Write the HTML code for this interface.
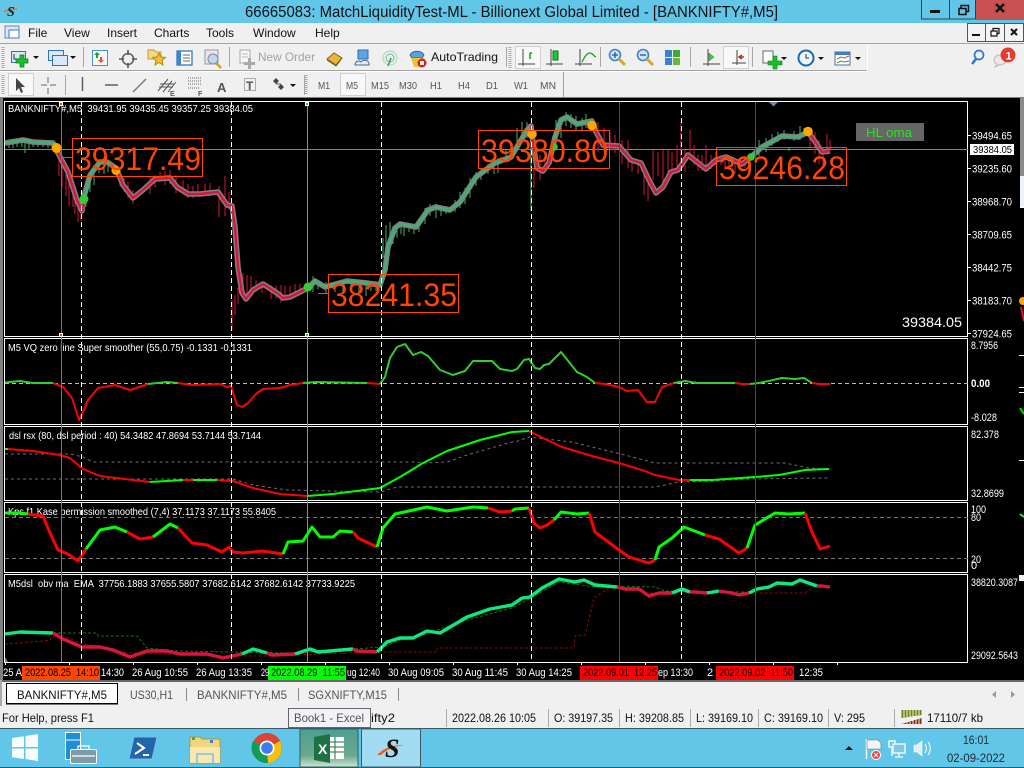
<!DOCTYPE html>
<html><head><meta charset="utf-8"><title>BANKNIFTY</title>
<style>
html,body{margin:0;padding:0;width:1024px;height:768px;overflow:hidden;background:#f0f0f0}
svg{display:block;font-family:"Liberation Sans",sans-serif}
text{white-space:pre}
.c{fill:#fff;font-size:10.5px}
.a{fill:#fff;font-size:11px}
.m{fill:#111;font-size:12px}
.s{fill:#111;font-size:12px}
.t{fill:#fff;font-size:12px}
.p{fill:#ff4500;font-size:32px}
.tb{fill:#555;font-size:10.5px}
.l{fill:none;stroke-linejoin:round;stroke-linecap:butt}
.crisp{shape-rendering:crispEdges}
</style></head><body>
<svg width="1024" height="768" viewBox="0 0 1024 768" xmlns="http://www.w3.org/2000/svg">
<!-- title bar -->
<rect width="1024" height="23" fill="#62c6e8"/>
<text x="245" y="17" font-size="15.5" fill="#111" textLength="533" lengthAdjust="spacingAndGlyphs">66665083: MatchLiquidityTest-ML - Billionext Global Limited - [BANKNIFTY#,M5]</text>
<path d="M4 12C8 9 12 9 17 9" stroke="#e8742a" stroke-width="1.5" fill="none"/>
<text x="7" y="16" font-size="14" font-style="italic" font-family="Liberation Serif" font-weight="bold" fill="#222">S</text>
<rect x="921.5" y="-1" width="28" height="20" fill="none" stroke="#29444f"/>
<rect x="949.5" y="-1" width="26" height="20" fill="none" stroke="#29444f"/>
<rect x="976" y="0" width="48" height="20" fill="#c75050"/>
<rect x="930" y="10" width="10" height="3" fill="#111"/>
<path d="M959 8.5h7v6h-7zM961 8V5.5h7.5v6H966" fill="none" stroke="#111" stroke-width="1.5"/>
<path d="M996 4l8 8m0-8l-8 8" stroke="#111" stroke-width="2.5"/>
<!-- menu bar -->
<rect y="23" width="1024" height="20" fill="#f0f0f0"/>
<rect x="5" y="26" width="14" height="12" fill="#dbe8f5" stroke="#5a8ac0"/>
<rect x="9" y="30" width="10" height="8" fill="#fff" stroke="#3f7ab8"/>
<text class="m" x="28" y="37">File</text><text class="m" x="64" y="37">View</text><text class="m" x="107" y="37">Insert</text><text class="m" x="154" y="37">Charts</text><text class="m" x="206" y="37">Tools</text><text class="m" x="253" y="37">Window</text><text class="m" x="315" y="37">Help</text>
<g fill="#f4f4f4" stroke="#555"><rect x="967.5" y="23.5" width="18" height="18"/><rect x="985.5" y="23.5" width="19" height="18"/><rect x="1004.5" y="23.5" width="19" height="18"/></g>
<rect x="972" y="34" width="8" height="2" fill="#111"/>
<path d="M991 31h6v5h-6zM993 30.5v-2h6v5h-2" fill="none" stroke="#111" stroke-width="1.2"/>
<path d="M1011 29l6 6m0-6l-6 6" stroke="#111" stroke-width="2"/>
<!-- toolbars -->
<rect y="43" width="1024" height="54" fill="#f0f0f0"/>
<rect y="43" width="1024" height="1" fill="#a3a3a3"/>
<rect y="70" width="867" height="1" fill="#a3a3a3"/><rect y="71" width="868" height="1" fill="#fff"/>
<rect x="867" y="44" width="1" height="26" fill="#fff"/>
<rect x="563" y="72" width="1" height="25" fill="#a3a3a3"/>
<g stroke="#aaa" stroke-dasharray="1 1" stroke-width="3" class="crisp"><path d="M3 47v21M3 75v20M510 47v21M306 75v20"/></g>
<g stroke="#a6a6a6" class="crisp"><path d="M83.5 47v20M229.5 47v20M506.5 47v20M600.5 47v20M690.5 47v20M752.5 47v20M65.5 75v20M304.5 75v20"/></g>
<!-- toolbar1 icons -->
<rect x="11.5" y="51.5" width="14" height="11" fill="#dbe8f8" stroke="#2f74b8"/><path d="M14 54v5h6" stroke="#333" fill="none"/>
<path d="M20 53h4v4h4v4h-4v4h-4v-4h-4v-4h4z" transform="translate(0,2)" fill="#18c02c" stroke="#0b7a18" stroke-width=".7"/>
<path d="M33 56h6l-3 3z" fill="#111"/>
<rect x="48.5" y="50.5" width="15" height="10" fill="#dbe8f8" stroke="#2f74b8"/><rect x="52.5" y="55.5" width="15" height="10" fill="#dbe8f8" stroke="#2f74b8"/>
<path d="M70 56h6l-3 3z" fill="#111"/>
<rect x="92.5" y="50.5" width="15" height="15" fill="#f7f7f7" stroke="#4a90d0"/><path d="M97 52l3 3h-2v3h-2v-3h-2z" fill="#1ba32b"/><path d="M101 63l-3-3h2v-3h2v3h2z" fill="#e4532a"/>
<circle cx="128" cy="59" r="5.5" fill="none" stroke="#666" stroke-width="1.6"/><path d="M128 50v5M128 63v5M119 59h5M132 59h5" stroke="#555" stroke-width="1.6"/>
<path d="M148 50h6l2 2h5v7h-13z" fill="#f5d98a" stroke="#c39a30"/><path d="M159 53l2 4 4.5.5-3.5 3 1 4.5-4-2.5-4 2.5 1-4.5-3.5-3 4.5-.5z" fill="#f2c12e" stroke="#b48a12"/>
<rect x="177" y="51" width="15" height="14" fill="#fff" stroke="#3579c0" stroke-width="1.3"/><rect x="177" y="51" width="4" height="14" fill="#3d86cf"/><path d="M183 55h7M183 58h7M183 61h7" stroke="#666"/>
<rect x="205" y="50" width="13" height="14" fill="#e7e7e7" stroke="#999"/><circle cx="213" cy="59" r="5" fill="#bcd8f2" stroke="#889"/><path d="M216 63l5 5" stroke="#d69c25" stroke-width="2.5"/>
<rect x="240" y="50" width="10" height="13" fill="#f7f7f7" stroke="#aaa"/><path d="M242 54h6M242 57h6" stroke="#bbb"/><path d="M248 58h3v4h4v3h-4v4h-3v-4h-4v-3h4z" fill="#aaa"/>
<text x="258" y="61" font-size="12" fill="#a2a2a2" textLength="57" lengthAdjust="spacingAndGlyphs">New Order</text>
<path d="M327 59l7-6 8 5-6 7z" fill="#e8b63c" stroke="#8a6014"/><path d="M327 60l9 6 6-8" fill="none" stroke="#7a5210"/>
<rect x="358" y="50" width="10" height="9" fill="#5aa6e4" stroke="#2c6fb0"/><path d="M355 65c0-4 4-5 6-3 2-3 9-2 8 3z" fill="#dfeaf6" stroke="#4a6a8a"/>
<circle cx="390" cy="58" r="7" fill="#e7efe7" stroke="#9db"/><circle cx="390" cy="58" r="4" fill="none" stroke="#8ab"/><path d="M388 66l3-8" stroke="#3aaa44" stroke-width="1.6"/>
<path d="M410 55c2-5 12-5 14 0l-2 3h-10z" fill="#5aa2d8" stroke="#2c6a9c"/><path d="M411 58h14l-2 9h-9z" fill="#f0c23c"/><circle cx="422" cy="63" r="4.5" fill="#d42020"/><rect x="420" y="61" width="4" height="4" fill="#fff"/>
<text x="431" y="61" font-size="12" fill="#111" textLength="67" lengthAdjust="spacingAndGlyphs">AutoTrading</text>
<rect x="515.5" y="46.5" width="25" height="22" fill="#f8f8f8" stroke="#d0d0d0"/>
<g fill="none" stroke="#444"><path d="M523 49v17M518 64h17M580 49v17M575 64h17M551 49v17M546 64h17M708 49v17M703 64h17M737 49v17M732 64h17"/></g>
<path d="M530 53v6M530 53h2" stroke="#1a9a2a" stroke-width="1.5" fill="none"/>
<rect x="553" y="51" width="5" height="9" fill="#1fc43a" stroke="#0a7a1a"/>
<path d="M582 62c3-6 5-9 8-9s3 3 6 4" stroke="#1a9a2a" fill="none" stroke-width="1.3"/>
<circle cx="615" cy="55" r="5.5" fill="#cfe3f6" stroke="#3a86c8" stroke-width="1.6"/><path d="M612 55h6M615 52v6" stroke="#3a66a0" stroke-width="1.5"/><path d="M619 59l6 6" stroke="#d9a72a" stroke-width="3"/>
<circle cx="643" cy="55" r="5.5" fill="#cfe3f6" stroke="#3a86c8" stroke-width="1.6"/><path d="M640 55h6" stroke="#3a66a0" stroke-width="1.5"/><path d="M647 59l6 6" stroke="#d9a72a" stroke-width="3"/>
<rect x="665" y="50" width="7" height="7" fill="#3a7fd0"/><rect x="673" y="50" width="7" height="7" fill="#3fa836"/><rect x="665" y="58" width="7" height="7" fill="#3a7fd0"/><rect x="673" y="58" width="7" height="7" fill="#6fb43a"/>
<path d="M709 53l5 4-5 4z" fill="#4cc04c" stroke="#1a8a2a" stroke-width=".5"/>
<rect x="723.5" y="46.5" width="25" height="22" fill="#f8f8f8" stroke="#d0d0d0"/>
<path d="M737 50v15M732 63h14" stroke="#444" fill="none"/><path d="M739 57h5M742 55l-3 2 3 2" stroke="#c03020" fill="none" stroke-width="1.5"/>
<rect x="763" y="51" width="10" height="12" fill="#fff" stroke="#666"/><path d="M773 56h4v5h5v4h-5v4h-4v-4h-5v-4h5z" fill="#16c02a" stroke="#0c7a18" stroke-width=".6"/>
<path d="M781 57h6l-3 3z" fill="#111"/>
<circle cx="806" cy="58" r="7.5" fill="#eef6fc" stroke="#1f6ab0" stroke-width="2"/><path d="M806 54v4h3" stroke="#333" fill="none"/>
<path d="M818 57h6l-3 3z" fill="#111"/>
<rect x="835" y="52" width="15" height="13" fill="#fff" stroke="#4a70a0"/><rect x="835" y="52" width="15" height="3" fill="#3a80c8"/><path d="M837 59l4-2 3 1 5-2" stroke="#c05030" fill="none"/><path d="M837 63l4-2 3 1 5-1" stroke="#3a9a3a" fill="none"/>
<path d="M855 57h6l-3 3z" fill="#111"/>
<circle cx="979" cy="55" r="4.5" fill="none" stroke="#2f74c8" stroke-width="1.7"/><path d="M976 59l-4 5" stroke="#2f74c8" stroke-width="2.5"/>
<ellipse cx="1000" cy="60" rx="6" ry="5" fill="#e8e8e8" stroke="#bbb"/><path d="M997 64l-2 3 4-2" fill="#e8e8e8" stroke="#bbb"/>
<circle cx="1008" cy="55" r="7.5" fill="#e53b2e"/><text x="1005.5" y="59.5" font-size="11" font-weight="bold" fill="#fff">1</text>
<!-- toolbar2 icons -->
<rect x="8.5" y="73.5" width="25" height="22" fill="#f8f8f8" stroke="#d0d0d0"/>
<path d="M16 78l0 13 3-3 2 5 2-1-2-5 4 0z" fill="#444"/>
<path d="M48 77v6M48 88v6M41 85h6M50 85h6" stroke="#666"/>
<path d="M82.5 77v14" stroke="#555" stroke-width="1.4"/><path d="M105 85h13" stroke="#555" stroke-width="1.4"/><path d="M133 92l13-13" stroke="#777" stroke-width="1.4"/>
<path d="M158 91l10-12M163 92l9-11M168 92l8-10M160 84h14M159 87h14" stroke="#555" fill="none"/><text x="170" y="96" font-size="7" font-weight="bold" fill="#555">E</text>
<path d="M188 78h13M188 81h13M188 84h13M188 88h11" stroke="#666" stroke-dasharray="1 1"/><text x="198" y="96" font-size="7" font-weight="bold" fill="#555">F</text>
<text x="217" y="92" font-size="13" font-weight="bold" fill="#555">A</text>
<rect x="244.5" y="78.5" width="11" height="12" fill="none" stroke="#666" stroke-dasharray="1 1"/><text x="246" y="90" font-size="12" font-weight="bold" fill="#555">T</text>
<path d="M273 81l3-3 3 3-3 3z M278 87l3-3 3 3-3 3z" fill="#444"/><path d="M276 84l5 0" stroke="#555"/>
<path d="M290 84h6l-3 3z" fill="#111"/>
<rect x="340.5" y="73.5" width="25" height="22" fill="#f8f8f8" stroke="#d0d0d0"/>
<g><text class="tb" x="318" y="89" textLength="12" lengthAdjust="spacingAndGlyphs">M1</text><text class="tb" x="346" y="89" textLength="12" lengthAdjust="spacingAndGlyphs">M5</text><text class="tb" x="371" y="89" textLength="18" lengthAdjust="spacingAndGlyphs">M15</text><text class="tb" x="399" y="89" textLength="18" lengthAdjust="spacingAndGlyphs">M30</text><text class="tb" x="430" y="89" textLength="12" lengthAdjust="spacingAndGlyphs">H1</text><text class="tb" x="458" y="89" textLength="12" lengthAdjust="spacingAndGlyphs">H4</text><text class="tb" x="486" y="89" textLength="12" lengthAdjust="spacingAndGlyphs">D1</text><text class="tb" x="514" y="89" textLength="14" lengthAdjust="spacingAndGlyphs">W1</text><text class="tb" x="540" y="89" textLength="16" lengthAdjust="spacingAndGlyphs">MN</text></g>

<!-- chart background -->
<rect x="0" y="97" width="1024" height="1" fill="#808080"/>
<rect x="0" y="98" width="1024" height="582" fill="#000"/>
<rect x="0" y="98" width="3" height="582" fill="#808080"/>
<rect x="1020" y="98" width="4" height="78" fill="#8a8a8a"/>
<rect x="1020" y="176" width="4" height="31" fill="#eef2fa"/>
<rect x="1020" y="207" width="4" height="1" fill="#fff"/>
<circle cx="1023" cy="301" r="4" fill="#ffa500"/>
<path d="M1021 307l3 14" stroke="#dc143c" stroke-width="2"/>
<rect x="1019" y="355" width="5" height="1" fill="#fff"/><rect x="1019" y="387" width="5" height="1" fill="#fff"/><rect x="1019" y="392" width="5" height="1" fill="#fff"/>
<rect x="1019" y="575" width="5" height="6" fill="#eef2fa"/><rect x="1019" y="460" width="5" height="1" fill="#fff"/>
<path d="M1020 408l4 6" stroke="#00e000" stroke-width="2"/><path d="M1020 514l4 3" stroke="#2fe06f" stroke-width="2"/>

<!-- pane frames -->
<g class="crisp" fill="none" stroke="#fff">
<rect x="4.5" y="101.5" width="963" height="235"/>
<rect x="4.5" y="338.5" width="963" height="86"/>
<rect x="4.5" y="426.5" width="963" height="74"/>
<rect x="4.5" y="502.5" width="963" height="70"/>
<rect x="4.5" y="574.5" width="963" height="88"/>
</g>

<!-- legends -->
<text class="c" x="8" y="112" textLength="245" lengthAdjust="spacingAndGlyphs">BANKNIFTY#,M5  39431.95 39435.45 39357.25 39384.05</text>
<text class="c" x="8" y="351" textLength="244" lengthAdjust="spacingAndGlyphs">M5 VQ zero line Super smoother (55,0.75) -0.1331 -0.1331</text>
<text class="c" x="9" y="439" textLength="252" lengthAdjust="spacingAndGlyphs">dsl rsx (80, dsl period : 40) 54.3482 47.8694 53.7144 53.7144</text>
<text class="c" x="8" y="515" textLength="268" lengthAdjust="spacingAndGlyphs">Kps f1 Kase permission smoothed (7,4) 37.1173 37.1173 55.8405</text>
<text class="c" x="8" y="587" textLength="347" lengthAdjust="spacingAndGlyphs">M5dsl  obv ma  EMA  37756.1883 37655.5807 37682.6142 37682.6142 37733.9225</text>

<!-- horizontal price and level lines -->
<path class="crisp" d="M5 149.5H968" stroke="#778899"/>
<g class="crisp" stroke="#bbb" stroke-dasharray="4 3"><path d="M5 383.5H968"/></g>
<g class="crisp" stroke="#777" stroke-dasharray="4 3"><path d="M5 517.5H968M5 558.5H968"/></g>

<!-- candle wicks -->
<path class="crisp" fill="none" stroke="#3cb371" d="M9 143v5M13 142v6M17 143v4M22 142v5M25 140v13M29 142v8M33 142v5M38 142v5M43 143v4M48 143v5M86 185v22M90 175v17M94 165v20M99 160v13M104 160v14M108 160v12M112 164v8M313 276v16M318 280v9M326 282v12M335 282v10M343 280v12M351 281v10M359 281v12M366 282v14M371 281v10M376 281v10M383 238v20M386 225v34M390 222v20M393 226v18M397 224v14M401 222v12M404 226v10M409 225v7M414 224v10M419 224v8M425 208v16M430 204v12M436 204v14M441 206v10M446 206v8M455 200v12M460 192v16M465 188v16M470 178v20M476 172v14M481 168v12M488 164v10M494 162v12M498 158v15M506 150v12M511 148v12M517 128v16M522 122v20M527 122v16M531 130v81M556 120v24M561 118v20M566 112v14M571 114v14M576 116v14M582 118v12M586 114v14M759 140v16M766 138v14M772 134v12M778 132v10M784 130v10M789 147v4M794 131v10M800 126v14M804 128v8"/>
<path class="crisp" fill="none" stroke="#dc143c" d="M59 158v18M62 165v22M66 168v28M69 172v34M73 185v22M75 190v24M78 196v26M81 200v21M120 170v16M124 178v14M128 182v16M133 190v14M150 178v16M155 175v12M160 172v10M165 171v14M170 170v14M176 175v18M183 180v14M188 184v14M193 186v12M198 184v10M205 184v10M210 183v8M219 186v31M225 176v40M229 192v18M232 204v20M232 300v30M235 295v20M238 288v16M243 273v22M247 275v20M251 276v14M256 280v12M262 283v10M271 285v14M276 286v12M281 285v18M285 286v12M290 286v10M295 284v10M300 284v10M536 140v24M534 168v20M540 155v25M545 160v10M598 122v30M604 128v24M610 132v18M615 135v18M622 140v24M628 140v28M632 158v14M638 162v12M644 165v30M648 180v21M653 150v30M658 152v24M663 150v32M668 150v30M672 152v24M677 145v22M681 122v43M685 150v22M690 130v30M694 145v20M698 155v16M702 155v15M706 145v26M711 155v14M716 152v14M721 155v10M725 156v14M729 158v12M735 160v14M740 162v8M745 160v8M810 128v20M815 132v22M819 140v24M823 148v18M827 134v18M830 140v12"/>

<!-- main line -->
<g class="l" stroke="#808080" stroke-width="5.5">
<polyline points="5,143 23,140 33,142 53,143 58,153 68,172 77,200 82,211 83,200 90,175 100,162 107,162 116,168 123,185 133,198 143,190 155,179 170,178 177,187 188,194 200,194 218,192 227,205 232,206 235,227 238,267 242,293 246,299 253,290 263,284 277,293 283,298 290,297 308,288 315,281 325,287 347,281 367,283 380,285 385,270 388,247 395,228 400,224 416,227 428,210 436,207 450,210 460,202 476,177 495,163 511,157 527,130 531,126 533,143 537,168 543,171 549,163 555,137 561,120 567,117 577,124 592,121 595,130 603,145 619,146 631,160 641,163 649,180 656,193 663,187 671,172 678,170 688,155 706,169 716,160 726,157 742,164 751,157 762,147 782,136 798,137 808,132 814,140 822,152 830,151"/>
</g>
<g class="l" stroke-width="2.4">
<polyline stroke="#3cb371" points="5,143 23,140 33,142 53,143 56,148"/>
<polyline stroke="#dc143c" points="56,148 58,153 68,172 77,200 82,211 84,204"/>
<polyline stroke="#3cb371" points="84,204 90,175 100,162 107,162 116,168"/>
<polyline stroke="#dc143c" points="116,168 123,185 133,198 143,190 155,179 170,178 177,187 188,194 200,194 218,192 227,205 232,206 235,227 238,267 242,293 246,299 253,290 263,284 277,293 283,298 290,297 308,288"/>
<polyline stroke="#3cb371" points="308,288 315,281 325,287 347,281 367,283 380,285 385,270 388,247 395,228 400,224 416,227 428,210 436,207 450,210 460,202 476,177 495,163 511,157 527,130 531,126"/>
<polyline stroke="#dc143c" points="531,126 533,143 537,168 543,171 549,163 553,145"/>
<polyline stroke="#3cb371" points="553,145 555,137 561,120 567,117 577,124 592,121"/>
<polyline stroke="#dc143c" points="592,121 595,130 603,145 619,146 631,160 641,163 649,180 656,193 663,187 671,172 678,170 688,155 706,169 716,160 726,157 742,164 751,157"/>
<polyline stroke="#3cb371" points="751,157 762,147 782,136 798,137 808,132"/>
<polyline stroke="#dc143c" points="808,132 814,140 822,152 830,151"/>
</g>

<!-- sub 1 -->
<g class="l" stroke-width="2">
<polyline stroke="#32cd32" points="5,382.5 20,381 33,383 53,383"/>
<polyline stroke="#f00" points="53,383 63,387 72,398 79,420 83,412 88,400 98,388 115,385 130,390 148,384"/>
<polyline stroke="#32cd32" points="148,384 167,382 178,383"/>
<polyline stroke="#f00" points="178,383 192,385 220,384 227,387 231,386 237,405 242,407 248,403 257,393 263,389 280,388 290,385 303,383"/>
<polyline stroke="#32cd32" points="303,383 315,382 367,383"/>
<polyline stroke="#f00" points="367,383 380,384"/>
<polyline stroke="#32cd32" points="380,384 385,377 390,358 397,347 405,344 413,355 421,352 428,356 440,370 453,375 465,371 473,361 492,361 500,369 512,371 517,369 524,360 529,359 535,368 540,369 544,365 549,364 561,352 577,372 587,377 595,383"/>
<polyline stroke="#f00" points="595,383 605,384 619,387 627,391 638,390 647,402 655,402 662,387 674,383"/>
<polyline stroke="#32cd32" points="674,383 685,381 697,383 735,383"/>
<polyline stroke="#f00" points="735,383 742,384 750,384"/>
<polyline stroke="#32cd32" points="750,384 759,383 782,378 795,379 804,378 812,383"/>
<polyline stroke="#f00" points="812,383 819,384 830,384"/>
</g>

<!-- sub 2 -->
<g class="l" stroke="#6e6e6e" stroke-dasharray="3 3">
<polyline points="5,454 70,454 83,457 93,462 417,462 423,463 447,462 467,455 512,442 515,442 529,437 572,442 592,447 625,455 655,463 785,463 809,468 829,469"/>
<polyline points="5,479 233,479 253,485 287,490 380,492 397,487 655,487 679,482 712,481 745,479 830,478"/>
</g>
<g class="l" stroke-width="2">
<polyline stroke="#0f0" points="5,449 8,449"/>
<polyline stroke="#f00" points="8,449 33,451 60,455 70,458 83,469 100,476 133,480 150,482"/>
<polyline stroke="#0f0" points="150,482 183,480"/>
<polyline stroke="#f00" points="183,480 193,480"/>
<polyline stroke="#0f0" points="193,480 217,480"/>
<polyline stroke="#f00" points="217,480 233,481 253,488 280,494 307,496"/>
<polyline stroke="#0f0" points="307,496 333,494 380,488 400,477 423,463 447,451 480,440 512,432 529,431"/>
<polyline stroke="#f00" points="529,431 545,439 562,447 592,456 619,463 645,471 655,475 679,480 690,480"/>
<polyline stroke="#0f0" points="690,480 712,480 755,477 779,475 805,470 829,469"/>
</g>

<!-- sub 3 -->
<g class="l" stroke-width="3">
<polyline stroke="#0f0" points="5,513 20,513 28,514"/>
<polyline stroke="#f00" points="28,514 43,516 50,533 58,550 68,554 78,561 86,549"/>
<polyline stroke="#0f0" points="86,549 100,530 115,527 127,532"/>
<polyline stroke="#f00" points="127,532 140,539 153,537"/>
<polyline stroke="#0f0" points="153,537 170,524 178,528"/>
<polyline stroke="#f00" points="178,528 192,543 207,545 222,552 229,547 233,552 243,553 262,551 283,554"/>
<polyline stroke="#0f0" points="283,554 288,542 303,541 312,527 320,537 333,537 340,531 353,532"/>
<polyline stroke="#f00" points="353,532 358,538 377,547"/>
<polyline stroke="#0f0" points="377,547 383,528 395,514 427,507 447,511 473,507 488,508"/>
<polyline stroke="#f00" points="488,508 500,512 512,511"/>
<polyline stroke="#0f0" points="512,511 515,509 529,508"/>
<polyline stroke="#f00" points="529,508 534,523 540,528 547,525 554,520"/>
<polyline stroke="#0f0" points="554,520 561,512 577,514 589,513"/>
<polyline stroke="#f00" points="589,513 595,532 619,550 629,557 649,563 655,560"/>
<polyline stroke="#0f0" points="655,560 659,547 672,538 684,527 705,535"/>
<polyline stroke="#f00" points="705,535 719,539 739,553 747,548"/>
<polyline stroke="#0f0" points="747,548 755,525 775,513 789,514 805,513"/>
<polyline stroke="#f00" points="805,513 812,532 820,549 830,546"/>
</g>

<!-- sub 4 -->
<g class="l">
<polyline stroke="#0a7a0a" stroke-dasharray="3 2" points="53,633 97,633 98,636 137,636 147,648 177,651 230,652 293,653 383,647 400,640 413,638 467,620 512,608 522,603 559,582 595,587 617,586 655,587 665,591 745,592"/>
<polyline stroke="#8b0a0a" stroke-dasharray="3 2" points="5,644 43,641 50,640 57,633 80,643 127,653 230,656 267,656 377,652 437,652 437,648 574,648 575,636 585,635 594,598 609,588 639,588 645,593 752,593 805,593 815,586"/>
</g>
<g class="l" stroke-width="3.4">
<polyline stroke="#0ee87e" points="5,634 20,632 53,633"/>
<polyline stroke="#dc143c" points="53,633 63,639 82,647 100,647 113,650 130,657 147,651 167,651 180,654 207,654 223,658 242,654"/>
<polyline stroke="#0ee87e" points="242,654 253,649 267,653"/>
<polyline stroke="#dc143c" points="267,653 272,655 295,654"/>
<polyline stroke="#0ee87e" points="295,654 310,649 318,652 353,649"/>
<polyline stroke="#dc143c" points="353,649 357,651 377,652"/>
<polyline stroke="#0ee87e" points="377,652 387,642 400,638 413,638 427,631 440,633 467,617 490,609 512,605 522,598 530,597 542,588 559,579 575,582 584,580 595,585 617,587"/>
<polyline stroke="#dc143c" points="617,587 625,589 639,589 649,596 659,593 672,593"/>
<polyline stroke="#0ee87e" points="672,593 682,589 690,592"/>
<polyline stroke="#dc143c" points="690,592 695,592 707,593"/>
<polyline stroke="#0ee87e" points="707,593 719,591"/>
<polyline stroke="#dc143c" points="719,591 732,593 739,595 749,593"/>
<polyline stroke="#0ee87e" points="749,593 757,589 769,587 777,583 792,584 800,580 817,586"/>
<polyline stroke="#dc143c" points="817,586 822,586 830,587"/>
</g>
<path d="M5 657l3 5h-3z" fill="#778899"/>

<!-- vertical lines -->
<g class="crisp" stroke="#fff" stroke-dasharray="5 3"><path d="M81.5 102V662M231.5 102V662M381.5 102V662M531.5 102V662M681.5 102V662"/></g>
<rect x="61" y="102" width="1" height="560" fill="#ff4500"/>
<rect x="307" y="102" width="1" height="560" fill="#32cd32"/>
<rect x="619" y="102" width="1" height="560" fill="#f00"/>
<rect x="755" y="102" width="1" height="560" fill="#f00"/>
<g class="crisp" stroke="#fff" fill="#ff4500"><rect x="59.5" y="102.5" width="3" height="3"/><rect x="59.5" y="333.5" width="3" height="3"/></g>
<g class="crisp" stroke="#fff" fill="#32cd32"><rect x="305.5" y="102.5" width="3" height="3"/><rect x="305.5" y="333.5" width="3" height="3"/></g>
<path d="M769 102h9l-4.500 4.500z" fill="#778899"/>

<!-- markers -->
<g fill="#ffa500"><circle cx="56.5" cy="148" r="5"/><circle cx="116" cy="170.5" r="4.5"/><circle cx="532" cy="134" r="4.8"/><circle cx="592" cy="125.5" r="4.8"/><circle cx="808" cy="131.5" r="4.8"/></g>
<g fill="#32cd32"><circle cx="84" cy="199" r="4.5"/><circle cx="308" cy="287" r="4.5"/><circle cx="554" cy="147" r="3.8"/><circle cx="751" cy="157" r="3.8"/></g>

<!-- price boxes -->
<g class="crisp" fill="none" stroke="#ff4500">
<rect x="72.5" y="138.5" width="130" height="38"/><path d="M62 157.5h10M318 293.5h10"/>
<rect x="478.5" y="130.5" width="131" height="38"/>
<rect x="716.5" y="147.5" width="130" height="38"/>
<rect x="328.5" y="274.500" width="130" height="38"/>
</g>
<text class="p" x="75" y="170" textLength="126" lengthAdjust="spacingAndGlyphs">39317.49</text>
<text class="p" x="481" y="162" textLength="127" lengthAdjust="spacingAndGlyphs">39380.80</text>
<text class="p" x="719" y="179" textLength="126" lengthAdjust="spacingAndGlyphs">39246.28</text>
<text class="p" x="331" y="306" textLength="126" lengthAdjust="spacingAndGlyphs">38241.35</text>

<rect x="856" y="123" width="68" height="18" fill="#666"/>
<text x="866" y="137" font-size="13" fill="#2ee02e" textLength="46" lengthAdjust="spacingAndGlyphs">HL oma</text>
<text x="902" y="327" font-size="14" fill="#fff" textLength="60" lengthAdjust="spacingAndGlyphs">39384.05</text>

<!-- axis labels -->
<g class="crisp" stroke="#fff"><path d="M968 135.5h3M968 168.5h3M968 201.5h3M968 234.5h3M968 267.5h3M968 300.5h3M968 333.5h3"/></g>
<rect x="970" y="144" width="44" height="11" fill="#fff"/>
<text x="973" y="153" font-size="10.5" fill="#000" textLength="39" lengthAdjust="spacingAndGlyphs">39384.05</text>
<text class="a" x="972" y="139.5" textLength="40" lengthAdjust="spacingAndGlyphs">39494.65</text>
<text class="a" x="972" y="172.5" textLength="40" lengthAdjust="spacingAndGlyphs">39235.60</text>
<text class="a" x="972" y="205.5" textLength="40" lengthAdjust="spacingAndGlyphs">38968.70</text>
<text class="a" x="972" y="238.5" textLength="40" lengthAdjust="spacingAndGlyphs">38709.65</text>
<text class="a" x="972" y="271.5" textLength="40" lengthAdjust="spacingAndGlyphs">38442.75</text>
<text class="a" x="972" y="304.5" textLength="40" lengthAdjust="spacingAndGlyphs">38183.70</text>
<text class="a" x="972" y="337.5" textLength="40" lengthAdjust="spacingAndGlyphs">37924.65</text>
<text class="a" x="971" y="349" textLength="27" lengthAdjust="spacingAndGlyphs">8.7956</text>
<text class="a" x="971" y="387" font-weight="bold" textLength="19" lengthAdjust="spacingAndGlyphs">0.00</text>
<text class="a" x="971" y="421" textLength="26" lengthAdjust="spacingAndGlyphs">-8.028</text>
<text class="a" x="971" y="438" textLength="28" lengthAdjust="spacingAndGlyphs">82.378</text>
<text class="a" x="971" y="497" textLength="33" lengthAdjust="spacingAndGlyphs">32.8699</text>
<text class="a" x="971" y="513" textLength="15" lengthAdjust="spacingAndGlyphs">100</text>
<text class="a" x="971" y="521" textLength="10" lengthAdjust="spacingAndGlyphs">80</text>
<text class="a" x="971" y="563" textLength="10" lengthAdjust="spacingAndGlyphs">20</text>
<text class="a" x="971" y="569">0</text>
<text class="a" x="971" y="586" textLength="47" lengthAdjust="spacingAndGlyphs">38820.3087</text>
<text class="a" x="971" y="659" textLength="47" lengthAdjust="spacingAndGlyphs">29092.5643</text>

<!-- time axis -->
<g class="crisp" stroke="#fff"><path d="M5.5 662v3M69.5 662v3M133.5 662v3M197.5 662v3M261.5 662v3M325.5 662v3M389.5 662v3M453.5 662v3M517.5 662v3M581.5 662v3M645.5 662v3M709.5 662v3M773.5 662v3M837.5 662v3"/></g>
<rect x="22" y="666" width="78" height="14" fill="#ff4500"/><rect x="268" y="666" width="78" height="14" fill="#0f0"/><rect x="580" y="666" width="78" height="14" fill="#f00"/><rect x="716" y="666" width="78" height="14" fill="#f00"/>
<text class="a" x="3" y="676" textLength="19" lengthAdjust="spacingAndGlyphs">25 A</text>
<text x="25" y="676" font-size="11" fill="#000" textLength="74" lengthAdjust="spacingAndGlyphs">2022.08.25  14:10</text>
<text class="a" x="101" y="676" textLength="23" lengthAdjust="spacingAndGlyphs">14:30</text>
<text class="a" x="132" y="676" textLength="56" lengthAdjust="spacingAndGlyphs">26 Aug 10:55</text>
<text class="a" x="196" y="676" textLength="56" lengthAdjust="spacingAndGlyphs">26 Aug 13:35</text>
<text class="a" x="261" y="676" textLength="8" lengthAdjust="spacingAndGlyphs">29</text>
<text x="271" y="676" font-size="11" fill="#000" textLength="74" lengthAdjust="spacingAndGlyphs">2022.08.29  11:55</text>
<text class="a" x="347" y="676" textLength="33" lengthAdjust="spacingAndGlyphs">ug 12:40</text>
<text class="a" x="388" y="676" textLength="56" lengthAdjust="spacingAndGlyphs">30 Aug 09:05</text>
<text class="a" x="452" y="676" textLength="56" lengthAdjust="spacingAndGlyphs">30 Aug 11:45</text>
<text class="a" x="516" y="676" textLength="56" lengthAdjust="spacingAndGlyphs">30 Aug 14:25</text>
<text x="583" y="676" font-size="11" fill="#000" textLength="74" lengthAdjust="spacingAndGlyphs">2022.09.01  12:25</text>
<text class="a" x="658" y="676" textLength="35" lengthAdjust="spacingAndGlyphs">ep 13:30</text>
<text class="a" x="707" y="676">2</text>
<text x="719" y="676" font-size="11" fill="#000" textLength="74" lengthAdjust="spacingAndGlyphs">2022.09.02  11:50</text>
<text class="a" x="799" y="676" textLength="24" lengthAdjust="spacingAndGlyphs">12:35</text>

<!-- tabs -->
<rect y="680" width="1024" height="2" fill="#666"/>
<rect y="682" width="1024" height="25" fill="#f0f0f0"/>
<rect x="0" y="680" width="2" height="26" fill="#aaa"/>
<rect x="6.5" y="683.5" width="111" height="20" fill="#fff" stroke="#000"/><rect x="6" y="703" width="112" height="1.5" fill="#000"/>
<text class="s" x="17" y="699" textLength="90" lengthAdjust="spacingAndGlyphs">BANKNIFTY#,M5</text>
<g fill="#555" font-size="12"><text x="130" y="699" textLength="43" lengthAdjust="spacingAndGlyphs">US30,H1</text><text x="197" y="699" textLength="90" lengthAdjust="spacingAndGlyphs">BANKNIFTY#,M5</text><text x="308" y="699" textLength="79" lengthAdjust="spacingAndGlyphs">SGXNIFTY,M15</text></g>
<path class="crisp" d="M186.5 688v13M298.5 688v13M398.5 688v13" stroke="#888"/>
<path d="M996 691v7l-4-3.5zM1011 691v7l4-3.5z" fill="#999"/>
<!-- status bar -->
<rect y="707" width="1024" height="21" fill="#f0f0f0"/>
<text class="s" x="2" y="722" textLength="92" lengthAdjust="spacingAndGlyphs">For Help, press F1</text>
<text class="s" x="371" y="722" textLength="24" lengthAdjust="spacingAndGlyphs">ifty2</text>
<rect x="288.5" y="708.5" width="82" height="19" fill="#f2f2f7" stroke="#666"/>
<text x="294" y="722" font-size="12" fill="#555" textLength="70" lengthAdjust="spacingAndGlyphs">Book1 - Excel</text>
<path class="crisp" d="M446.5 709v18M548.5 709v18M619.5 709v18M690.5 709v18M758.5 709v18M828.5 709v18M894.5 709v18" stroke="#aaa"/>
<text class="s" x="452" y="722" textLength="84" lengthAdjust="spacingAndGlyphs">2022.08.26 10:05</text>
<text class="s" x="554" y="722" textLength="59" lengthAdjust="spacingAndGlyphs">O: 39197.35</text>
<text class="s" x="625" y="722" textLength="59" lengthAdjust="spacingAndGlyphs">H: 39208.85</text>
<text class="s" x="696" y="722" textLength="57" lengthAdjust="spacingAndGlyphs">L: 39169.10</text>
<text class="s" x="764" y="722" textLength="59" lengthAdjust="spacingAndGlyphs">C: 39169.10</text>
<text class="s" x="834" y="722" textLength="31" lengthAdjust="spacingAndGlyphs">V: 295</text>
<g class="crisp"><path d="M901 710h21v5l-21 3z" fill="#6f8412"/><path d="M901 724l21-6v6z" fill="#8e2a0e"/><path d="M901 710v14M904 710v14M907 710v14M910 710v14M913 710v14M916 710v14M919 710v14M922 710v14" stroke="#f0f0f0" stroke-width=".8"/></g>
<text class="s" x="927" y="722" textLength="56" lengthAdjust="spacingAndGlyphs">17110/7 kb</text>

<!-- taskbar -->
<rect y="728" width="1024" height="40" fill="#62c6e8"/>
<rect y="728" width="1024" height="1" fill="#3c5a66"/><rect y="767" width="1024" height="1" fill="#3c5a66"/>
<path d="M12 738l12-1.8V747H12zM25.5 736l12.5-2V747H25.5zM12 748.5h12V759l-12-1.8zM25.5 748.5H38V761l-12.5-2z" fill="#fff" opacity=".95"/>
<rect x="65.5" y="732.5" width="15" height="27" fill="#1f8ed8" stroke="#fff"/><path d="M66 740h14" stroke="#fff"/>
<rect x="70.5" y="749.5" width="26" height="14" rx="1.5" fill="#7f9aa8" stroke="#fff"/><path d="M78 749v-3h11v3" fill="none" stroke="#fff" stroke-width="1.3"/><path d="M72 756h23" stroke="#fff" stroke-width="1.2"/>
<path d="M134 737h23l-5 22h-23z" fill="#2266aa" stroke="#7fb8e0"/><path d="M137 743l7 5-9 6M143 755h6" stroke="#fff" stroke-width="2" fill="none"/>
<path d="M190 737h10l2 2h18v24h-30z" fill="#f3d57d" stroke="#b8933a"/><rect x="192" y="737" width="3" height="3" fill="#3cb33c"/><rect x="210" y="740" width="3" height="3" fill="#3a80d0"/>
<path d="M190 747h30v16h-30z" fill="#f9e8ae"/><path d="M197 763v-9h16v9" fill="none" stroke="#7fbfe8" stroke-width="1.5"/>
<circle cx="267" cy="748" r="15" fill="#db4437"/>
<path d="M267 748L254 756a15 15 0 0 0 14 7z" fill="#0f9d58"/><path d="M254 756a15 15 0 0 1-1-15l14 7z" fill="#0f9d58"/>
<path d="M267 748l13-7a15 15 0 0 1-12 22z" fill="#f4c20d"/>
<circle cx="267" cy="748" r="7.5" fill="#fff"/><circle cx="267" cy="748" r="5.8" fill="#3b7ded"/>
<defs><linearGradient id="g" x1="0" y1="0" x2="0" y2="1"><stop offset="0" stop-color="#4d9f92"/><stop offset=".7" stop-color="#6ba88e"/><stop offset="1" stop-color="#cfe6d6"/></linearGradient></defs>
<rect x="300" y="729" width="58" height="38" fill="url(#g)" stroke="#2e5f66"/>
<rect x="328" y="737" width="16" height="22" fill="#fff"/><path d="M328 742h16M328 747h16M328 752h16M335 737v22" stroke="#1e7145"/>
<path d="M314 737l16-3v29l-16-3z" fill="#1e7145"/><text x="318" y="754" font-size="14" font-weight="bold" fill="#fff">X</text>
<rect x="361.5" y="729" width="59" height="38" fill="#a2dcf2" stroke="#3c5a66"/>
<path d="M377 755c8-8 18-11 28-9-8-1-18 3-24 9z" fill="#e8601c"/>
<text x="385" y="757" font-family="Liberation Serif" font-style="italic" font-weight="bold" font-size="26" fill="#111">S</text>
<!-- tray -->
<path d="M845 750l4-4 4 4z" fill="#111"/>
<path d="M866.5 739v20" stroke="#fff" stroke-width="1.5"/><path d="M867 740h11l3 3v6h-14z" fill="#f2f6fa" stroke="#5a7a8a" stroke-width=".6"/>
<circle cx="876" cy="755" r="4.5" fill="#e8453c" stroke="#fff"/><path d="M874 753l4 4m0-4l-4 4" stroke="#fff"/>
<rect x="889" y="741" width="6" height="6" fill="none" stroke="#fff" stroke-width="1.4"/><rect x="893" y="744" width="12" height="9" fill="#7fc8e4" stroke="#fff" stroke-width="1.3"/><path d="M899 753v4M895 757h8M892 747v9" stroke="#fff" stroke-width="1.3"/>
<path d="M914 745h3l5-4v15l-5-4h-3z" fill="#dfeef6" stroke="#fff" stroke-width=".6"/><path d="M925 744c2 3 2 6 0 9M928 742c3 4 3 9 0 13" stroke="#e6f2f8" fill="none" stroke-width="1.3"/>
<text x="963" y="744" font-size="12" fill="#1c2a33" textLength="26" lengthAdjust="spacingAndGlyphs">16:01</text>
<text x="947" y="762" font-size="12" fill="#1c2a33" textLength="58" lengthAdjust="spacingAndGlyphs">02-09-2022</text>
</svg>
</body></html>
